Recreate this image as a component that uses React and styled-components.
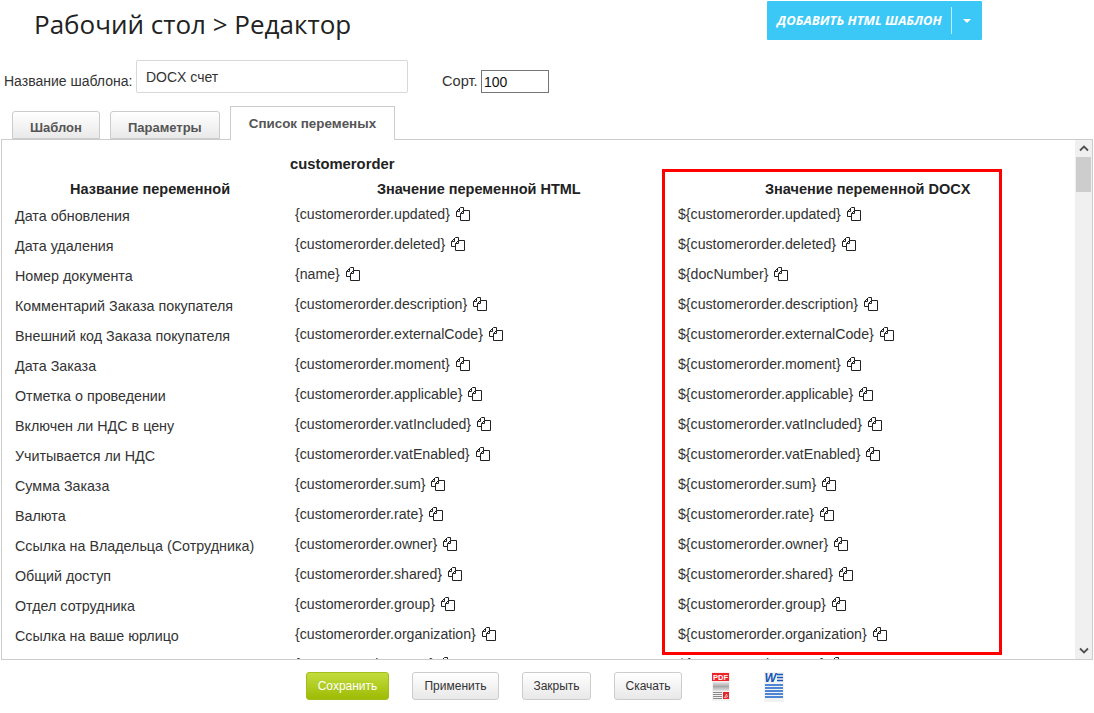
import React from "react";
import styled, { createGlobalStyle } from "styled-components";

const variables = [
  ["Дата обновления", "customerorder.updated"],
  ["Дата удаления", "customerorder.deleted"],
  ["Номер документа", "name", "docNumber"],
  ["Комментарий Заказа покупателя", "customerorder.description"],
  ["Внешний код Заказа покупателя", "customerorder.externalCode"],
  ["Дата Заказа", "customerorder.moment"],
  ["Отметка о проведении", "customerorder.applicable"],
  ["Включен ли НДС в цену", "customerorder.vatIncluded"],
  ["Учитывается ли НДС", "customerorder.vatEnabled"],
  ["Сумма Заказа", "customerorder.sum"],
  ["Валюта", "customerorder.rate"],
  ["Ссылка на Владельца (Сотрудника)", "customerorder.owner"],
  ["Общий доступ", "customerorder.shared"],
  ["Отдел сотрудника", "customerorder.group"],
  ["Ссылка на ваше юрлицо", "customerorder.organization"],
  ["Ссылка на контрагента", "customerorder.agent"],
];

const CopyIcon = () => (
  <CopyGlyph viewBox="0 0 14 14" fill="none" stroke="#222" strokeWidth="1">
    <path d="M4.5 9.5H.5V4.5L4.5.5H7.5V3.5" />
    <path d="M3.5 1.5V4.5H.5" />
    <path d="M7.5 3.5H13.5V13.5H4.5V6.5L7.5 3.5V6.5H4.5" />
  </CopyGlyph>
);

const PdfIcon = () => (
  <svg width="20" height="30" viewBox="0 0 20 30">
    <rect x="1" y="0" width="18" height="29" fill="#f2f2f2" />
    <rect x="1" y="1" width="17" height="8" fill="#f0222a" />
    <FileLabel x="9.5" y="7.8" fontSize="7.5" fill="#fff">PDF</FileLabel>
    <rect x="2" y="10" width="16" height="9" fill="url(#pdfBand)" />
    <path d="M2 20.5h9M2 22.5h9M2 24.5h9M2 26.5h9" stroke="#8a8a8a" />
    <rect x="12" y="20" width="6" height="7" fill="#e8232a" />
    <path d="M13.5 26l2-4 1 3-3 .5" stroke="#fff" strokeWidth=".6" fill="none" />
    <defs>
      <linearGradient id="pdfBand" x1="0" y1="0" x2="0" y2="1">
        <stop offset="0" stopColor="#e6e6e6" />
        <stop offset="0.5" stopColor="#a8a8a8" />
        <stop offset="1" stopColor="#e6e6e6" />
      </linearGradient>
    </defs>
  </svg>
);

const WordIcon = () => (
  <svg width="22" height="30" viewBox="0 0 22 30">
    <rect x="1" y="0" width="20" height="30" fill="#f2f2f2" />
    <FileLabel x="7.5" y="10" fontSize="12.5" fontStyle="italic" fill="#1656b8">W</FileLabel>
    <path d="M14 2.5h6M14 5.5h6M14 8.5h6" stroke="#1656b8" strokeWidth="1.5" />
    <path d="M2 13h18M2 16h18M2 19h18M2 22h18M2 25h18" stroke="#1a62cc" strokeWidth="1.7" />
  </svg>
);

const App = () => (
  <>
    <GlobalStyle />
    <Page>
      <Header>
        <Title>Рабочий стол &gt; Редактор</Title>
        <AddButton>
          <AddLabel>ДОБАВИТЬ HTML ШАБЛОН</AddLabel>
          <Caret />
        </AddButton>
      </Header>

      <TemplateForm>
        <FieldLabel>Название шаблона:</FieldLabel>
        <NameInput defaultValue="DOCX счет" />
        <SortLabel>Сорт.</SortLabel>
        <SortInput defaultValue="100" />
      </TemplateForm>

      <Tabs>
        <Tab>Шаблон</Tab>
        <Tab>Параметры</Tab>
        <Tab $active>Список переменых</Tab>
      </Tabs>

      <Panel>
        <TableArea>
          <Table>
            <EntityName>customerorder</EntityName>
            <HeadCell $pad="68px">Название переменной</HeadCell>
            <HeadCell $pad="82px">Значение переменной HTML</HeadCell>
            <HeadCell $pad="87px">Значение переменной DOCX</HeadCell>
            {variables.map(([title, html, docx]) => (
              <Row key={title}>
                <NameCell>{title}</NameCell>
                <CodeCell>
                  {`{${html}}`}
                  <CopyIcon />
                </CodeCell>
                <CodeCell>
                  {`\${${docx || html}}`}
                  <CopyIcon />
                </CodeCell>
              </Row>
            ))}
          </Table>
          <Highlight />
        </TableArea>
        <Scrollbar>
          <ScrollArrow viewBox="0 0 10 6">
            <path d="M1 5l4-4 4 4" />
          </ScrollArrow>
          <ScrollThumb />
          <ScrollSpacer />
          <ScrollArrow viewBox="0 0 10 6">
            <path d="M1 1l4 4 4-4" />
          </ScrollArrow>
        </Scrollbar>
      </Panel>

      <Footer>
        <SaveButton $width="83px">Сохранить</SaveButton>
        <FooterButton $width="87px">Применить</FooterButton>
        <FooterButton $width="69px">Закрыть</FooterButton>
        <FooterButton $width="68px">Скачать</FooterButton>
        <FileLinks>
          <PdfIcon />
          <WordIcon />
        </FileLinks>
      </Footer>
    </Page>
  </>
);

const GlobalStyle = createGlobalStyle`
  html, body {
    margin: 0;
    background: #fff;
    overflow: hidden;
  }
  body {
    font-family: "Liberation Sans", Arial, sans-serif;
    font-size: 14px;
    color: #333;
  }
`;

const Page = styled.div`
  width: 1094px;
  height: 713px;
`;

const Header = styled.header`
  display: flex;
  align-items: flex-start;
  height: 60px;
  padding: 1px 0 0 34px;
  box-sizing: border-box;
`;

const Title = styled.h1`
  width: 733px;
  margin: 0;
  font-family: "Open Sans", sans-serif;
  font-size: 26px;
  font-weight: 400;
  line-height: 47px;
  color: #222;
`;

const AddButton = styled.div`
  display: flex;
  align-items: center;
  width: 215px;
  height: 39px;
  background: #3bc8f6;
  border-radius: 1px;
`;

const AddLabel = styled.span`
  width: 185px;
  height: 27px;
  box-sizing: border-box;
  padding-left: 10px;
  border-right: 1px solid #bdeefc;
  font-family: "Open Sans", sans-serif;
  font-size: 13px;
  font-weight: 700;
  font-style: italic;
  line-height: 27px;
  color: #fff;
  white-space: nowrap;
`;

const Caret = styled.span`
  margin-left: 11px;
  border-top: 4px solid #fff;
  border-left: 4px solid transparent;
  border-right: 4px solid transparent;
`;

const TemplateForm = styled.div`
  display: flex;
  align-items: flex-start;
  height: 46px;
  padding-left: 4px;
`;

const FieldLabel = styled.label`
  width: 132px;
  margin-top: 13px;
  line-height: 16px;
  white-space: nowrap;
`;

const NameInput = styled.input`
  width: 272px;
  height: 33px;
  box-sizing: border-box;
  padding: 0 9px;
  border: 1px solid #d8d8d8;
  border-radius: 2px;
  outline: none;
  font: 14px "Liberation Sans", Arial, sans-serif;
  color: #333;
`;

const SortLabel = styled.span`
  width: 40px;
  margin: 13px 0 0 34px;
  font-size: 14.6px;
  line-height: 16px;
`;

const SortInput = styled.input`
  width: 68px;
  height: 23px;
  margin: 10px 0 0 -1px;
  box-sizing: border-box;
  padding: 0 2px;
  border: 1px solid #767676;
  outline: none;
  font: 14px "Liberation Sans", Arial, sans-serif;
  color: #111;
`;

const Tabs = styled.nav`
  display: flex;
  align-items: flex-end;
  height: 33px;
  padding-left: 12px;
  gap: 10px;
`;

const Tab = styled.div`
  position: relative;
  z-index: 1;
  box-sizing: border-box;
  padding: ${(p) => (p.$active ? "9px 18px 0" : "8px 17px 0")};
  height: ${(p) => (p.$active ? "34px" : "28px")};
  margin-bottom: ${(p) => (p.$active ? "-1px" : "0")};
  border: 1px solid #ccc;
  border-bottom: ${(p) => (p.$active ? "none" : "1px solid #ccc")};
  border-radius: ${(p) => (p.$active ? "0" : "3px 3px 0 0")};
  background: ${(p) => (p.$active ? "#fff" : "linear-gradient(#fff, #e9e9e9)")};
  font-size: ${(p) => (p.$active ? "13.4px" : "13px")};
  font-weight: 700;
  line-height: 16px;
  color: #555;
  white-space: nowrap;
`;

const Panel = styled.section`
  display: flex;
  width: 1092px;
  height: 521px;
  margin-left: 1px;
  box-sizing: border-box;
  border: 1px solid #ccc;
  overflow: hidden;
`;

const TableArea = styled.div`
  position: relative;
  flex: 1;
  overflow: hidden;
`;

const Table = styled.div`
  display: grid;
  grid-template-columns: 293px 383px 1fr;
  grid-auto-rows: 30px;
  padding-top: 12px;
`;

const EntityName = styled.div`
  grid-column: 1 / 4;
  height: 24px;
  padding-left: 288px;
  font-size: 14.8px;
  font-weight: 700;
  line-height: 24px;
  color: #222;
`;

const HeadCell = styled.div`
  margin-top: -7px;
  padding-left: ${(p) => p.$pad};
  font-size: 14.5px;
  font-weight: 700;
  line-height: 28px;
  color: #222;
  white-space: nowrap;
`;

const Row = styled.div`
  display: contents;
`;

const NameCell = styled.div`
  padding-left: 13px;
  font-size: 14.3px;
  line-height: 30px;
  margin-top: -11px;
  white-space: nowrap;
`;

const CodeCell = styled.div`
  display: flex;
  align-items: center;
  height: 30px;
  margin-top: -13px;
  font-size: 14.15px;
  white-space: nowrap;
`;

const CopyGlyph = styled.svg`
  width: 14px;
  height: 14px;
  margin-left: 6px;
  flex: none;
`;

const Highlight = styled.div`
  position: absolute;
  left: 660px;
  top: 29px;
  width: 340px;
  height: 486px;
  box-sizing: border-box;
  border: 3px solid #f00;
`;

const Scrollbar = styled.div`
  display: flex;
  flex-direction: column;
  align-items: center;
  width: 17px;
  background: #f0f0f0;
`;

const ScrollArrow = styled.svg`
  width: 10px;
  height: 17px;
  padding: 5px 0;
  box-sizing: border-box;
  fill: none;
  stroke: #505050;
  stroke-width: 1.8;
`;

const ScrollThumb = styled.div`
  width: 15px;
  height: 35px;
  background: #cdcdcd;
`;

const ScrollSpacer = styled.div`
  flex: 1;
`;

const Footer = styled.footer`
  display: flex;
  align-items: flex-start;
  gap: 23px;
  padding: 12px 0 0 306px;
`;

const FooterButton = styled.button`
  width: ${(p) => p.$width};
  height: 28px;
  padding: 0;
  border: 1px solid #ccc;
  border-radius: 3px;
  background: linear-gradient(#fff, #e8e8e8);
  font: 12px "Liberation Sans", Arial, sans-serif;
  color: #333;
  white-space: nowrap;
`;

const SaveButton = styled(FooterButton)`
  border-color: #a3bd1c;
  background: linear-gradient(#c3dc3f, #9ebb04);
  color: #fff;
`;

const FileLinks = styled.div`
  display: flex;
  gap: 32px;
  margin-left: 6px;
`;

const FileLabel = styled.text`
  font-family: "Liberation Sans", Arial, sans-serif;
  font-weight: 700;
  text-anchor: middle;
`;

export default App;
